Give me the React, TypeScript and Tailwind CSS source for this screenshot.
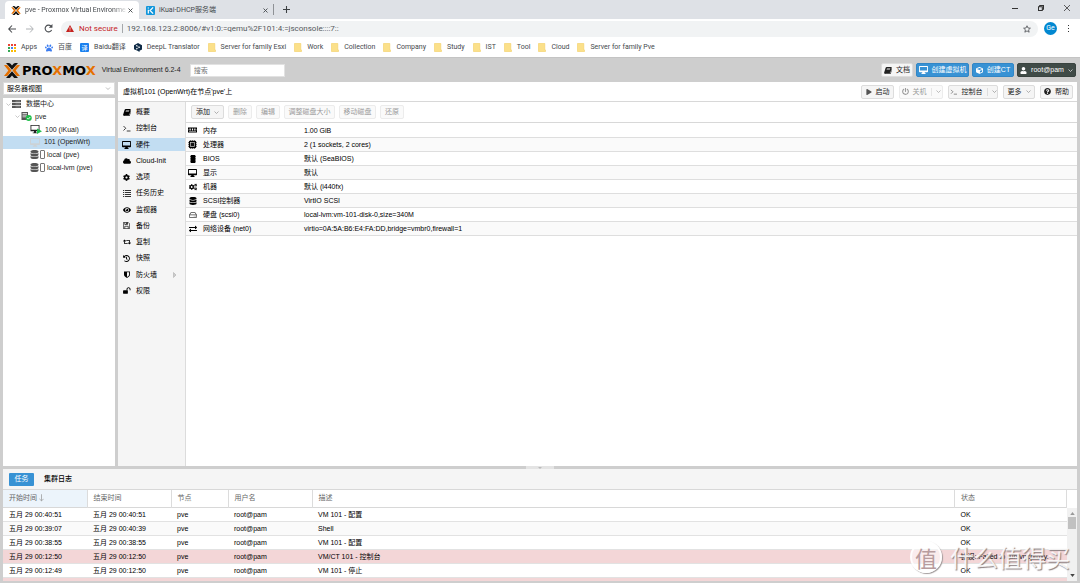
import React from "react";
import {
  FaCloud,
  FaCog,
  FaCogs,
  FaCube,
  FaDatabase,
  FaEye,
  FaHistory,
  FaPlay,
  FaPowerOff,
  FaQuestionCircle,
  FaRegHdd,
  FaRetweet,
  FaExchangeAlt,
  FaUser,
  FaPaw,
} from "react-icons/fa";

type IconProps = { className?: string };

const Monitor = ({ className = "" }: IconProps) => (
  <svg viewBox="0 0 18 16" className={className} fill="currentColor" aria-hidden="true">
    <path fillRule="evenodd" d="M1.500 0h15A1.500 1.500 0 0 1 18 1.500v9.700a1.500 1.500 0 0 1-1.500 1.500H11.500V14H13v1.800H5V14h1.500v-1.300h-5A1.500 1.500 0 0 1 0 11.200V1.500A1.500 1.500 0 0 1 1.500 0zm.300 1.800v7.400h14.400V1.800z" />
  </svg>
);

const Book = ({ className = "" }: IconProps) => (
  <svg viewBox="0 0 16 14" className={className} fill="currentColor" aria-hidden="true">
    <path fillRule="evenodd" d="M5.500 0H14c1.200 0 1.800.900 1.500 2L13 10.500c-.300 1-1 1.500-2 1.500H3.200c-.500 0-.600.600 0 .600H12c.600 0 1-.300 1.200-.800L15.500 4c.500.400.600.900.400 1.500l-2.200 7.300c-.200.700-.900 1.200-1.700 1.200H2.500C1 14 0 12.700.200 11.300L3.300 1.500C3.700.500 4.500 0 5.500 0zM6 3l-.300 1h6.600l.300-1zm-.600 2.200l-.300 1h6.600l.300-1z" />
  </svg>
);

const ListLines = ({ className = "" }: IconProps) => (
  <svg viewBox="0 0 16 14" className={className} fill="currentColor" aria-hidden="true">
    <path d="M0 0h2.500v2.200H0zM4 0h12v2.200H4zM0 4h2.500v2.200H0zM4 4h12v2.200H4zM0 8h2.500v2.200H0zM4 8h12v2.200H4zM0 12h2.500v2.200H0zM4 12h12v2.200H4z" />
  </svg>
);

const Floppy = ({ className = "" }: IconProps) => (
  <svg viewBox="0 0 14 14" className={className} fill="none" stroke="currentColor" strokeWidth="1.300" aria-hidden="true">
    <path d="M.700.700h9.500l3.100 3.100v9.500H.700zM3.500 13V8.500h7V13M3.500 1v4h5.500V1" />
    <path d="M6.500 1.200h2v3h-2z" fill="currentColor" stroke="none" />
  </svg>
);

const DataCenter = ({ className = "" }: IconProps) => (
  <svg viewBox="0 0 18 16" className={className} aria-hidden="true">
    <path fill="#555" d="M0 0h18v4.400H0zM0 5.800h18v4.400H0zM0 11.600h18V16H0z" />
    <path d="M7 2.200h9M7 8h9M7 13.800h9" stroke="#bbb" strokeWidth="1" />
  </svg>
);

const Prompt = ({ className = "" }: IconProps) => (
  <svg viewBox="0 0 16 14" className={className} fill="none" stroke="currentColor" strokeWidth="1.5" aria-hidden="true">
    <path d="M1 2l4.500 4.500L1 11M7.500 12H15" />
  </svg>
);

const Shield = ({ className = "" }: IconProps) => (
  <svg viewBox="0 0 14 16" className={className} aria-hidden="true">
    <path fill="currentColor" fillRule="evenodd" d="M0 1h14v7c0 4-3.500 6.500-7 8-3.500-1.500-7-4-7-8zM7 3v10.700c2.500-1.300 5-3 5-5.700V3z" />
  </svg>
);

const Unlock = ({ className = "" }: IconProps) => (
  <svg viewBox="0 0 18 16" className={className} aria-hidden="true">
    <rect x="0" y="7.500" width="11" height="8" rx="1" fill="currentColor" />
    <path d="M9 8V5a3.500 3.500 0 0 1 7 0v2.500" fill="none" stroke="currentColor" strokeWidth="2.200" />
  </svg>
);

const MemoryStick = ({ className = "" }: IconProps) => (
  <svg viewBox="0 0 18 12" className={className} aria-hidden="true">
    <path fill="currentColor" fillRule="evenodd" d="M0 1h18v3.500a1 1 0 0 0 0 2V11H0V6.500a1 1 0 0 0 0-2zM3 3v4h2.500V3zm4.800 0v4h2.500V3zm4.700 0v4H15V3zM2 9v1h14V9z" />
  </svg>
);

const Cpu = ({ className = "" }: IconProps) => (
  <svg viewBox="0 0 16 16" className={className} aria-hidden="true">
    <rect x="1.500" y="1.500" width="13" height="13" rx="2" fill="currentColor" />
    <path d="M4.500 0v16M8 0v16M11.500 0v16M0 4.500h16M0 8h16M0 11.500h16" stroke="currentColor" strokeWidth=".8" />
    <rect x="4.200" y="4.200" width="7.600" height="7.600" fill="#111" stroke="#cfcfcf" strokeWidth="1.200" />
  </svg>
);

const Chip = ({ className = "" }: IconProps) => (
  <svg viewBox="0 0 12 16" className={className} aria-hidden="true">
    <rect x="1.500" y="0" width="9" height="16" rx="1" fill="currentColor" />
    <path d="M0 3h12M0 6.500h12M0 10h12M0 13.500h12" stroke="currentColor" strokeWidth="1.200" />
  </svg>
);

const ChevronDown = ({ className = "" }: IconProps) => (
  <svg viewBox="0 0 10 6" className={className} fill="none" stroke="currentColor" strokeWidth="1.300" aria-hidden="true">
    <path d="M1 1l4 4 4-4" />
  </svg>
);

const Cross = ({ className = "" }: IconProps) => (
  <svg viewBox="0 0 10 10" className={className} fill="none" stroke="currentColor" strokeWidth="1.800" aria-hidden="true">
    <path d="M1 1l8 8M9 1l-8 8" />
  </svg>
);

const ProxmoxMark = ({ className = "" }: IconProps) => (
  <svg viewBox="0 0 32 30" className={className} aria-hidden="true">
    <path fill="#111" d="M4 0h5.500c1.400 0 2.500.600 3.500 1.700l3 3.400 3-3.400C20 .600 21.100 0 22.500 0H28L16 13.300zM4 30h5.500c1.400 0 2.500-.600 3.500-1.700l3-3.400 3 3.400c1 1.100 2.100 1.700 3.500 1.700H28L16 16.700z" />
    <path fill="#e57000" d="M0 4h4.200c1.500 0 2.700.600 3.600 1.700L15 15l-7.200 9.300C6.900 25.400 5.700 26 4.200 26H0l8.700-11zM32 4h-4.200c-1.500 0-2.700.600-3.600 1.700L17 15l7.200 9.300c.900 1.100 2.100 1.700 3.600 1.700H32l-8.700-11z" />
  </svg>
);

const FolderIcon = () => (
  <svg viewBox="0 0 8 9" className="h-[9px] w-2 shrink-0" aria-hidden="true">
    <path d="M.500.500h6.300v5.800l.700.700v1.500H.500z" fill="#fbe08a" stroke="#f3cf63" strokeWidth=".6" />
  </svg>
);

const AppsIcon = () => (
  <svg viewBox="0 0 8 8" className="size-2 shrink-0" aria-hidden="true">
    <path fill="#ea4335" d="M0 0h2v2H0zM3 0h2v2H3zM6 0h2v2H6z" />
    <path fill="#34a853" d="M0 3h2v2H0z" />
    <path fill="#4285f4" d="M3 3h2v2H3z" />
    <path fill="#fbbc05" d="M6 3h2v2H6zM3 6h2v2H3zM6 6h2v2H6z" />
    <path fill="#34a853" d="M0 6h2v2H0z" />
  </svg>
);

const DeepLIcon = () => (
  <svg viewBox="0 0 16 18" className="h-[9px] w-2 shrink-0" aria-hidden="true">
    <path fill="#0f2b46" d="M8 0l8 4.500v8.300L11 15.500V18l-4-2.300L0 12.500v-8z" />
    <path d="M5.500 5.500l5 3-5 3" fill="none" stroke="#fff" strokeWidth="1" />
    <circle cx="5.500" cy="5.500" r="1.300" fill="#fff" />
    <circle cx="10.500" cy="8.500" r="1.300" fill="#fff" />
    <circle cx="5.500" cy="11.500" r="1.300" fill="#fff" />
  </svg>
);

const bookmarks: { label: string; icon: React.ReactNode }[] = [
  { label: "Apps", icon: <AppsIcon /> },
  { label: "百度", icon: <FaPaw className="size-2 shrink-0 text-[#3b7cf0]" /> },
  {
    label: "Baidu翻译",
    icon: <span className="flex size-[9px] shrink-0 items-center justify-center rounded-[1px] bg-[#1a80ef] text-[6px] text-white">译</span>,
  },
  { label: "DeepL Translator", icon: <DeepLIcon /> },
  ...["Server for family Esxi", "Work", "Collection", "Company", "Study", "IST", "Tool", "Cloud", "Server for family Pve"].map(
    (label) => ({ label, icon: <FolderIcon /> }),
  ),
];

function Browser() {
  return (
    <div className="shrink-0 bg-white font-['Roboto','Noto_Sans_CJK_SC',sans-serif] text-[7px] text-[#45494d]">
      <div className="flex h-[19px] items-end bg-[#dee1e6] pl-[5px]">
        <div className="flex h-[18px] w-[134px] items-center rounded-t-[4px] bg-white px-1.5">
          <ProxmoxMark className="h-[9px] w-[10px] shrink-0" />
          <span className="ml-1 min-w-0 flex-1 overflow-hidden whitespace-nowrap [mask-image:linear-gradient(to_right,#000_85%,transparent)]">
            pve - Proxmox Virtual Environme
          </span>
          <button aria-label="Close tab">
            <Cross className="size-[5px]" />
          </button>
        </div>
        <div className="flex h-[18px] w-[134px] items-center pl-[7px] pr-[5px]">
          <span className="flex size-[9px] shrink-0 items-center justify-center rounded-[1px] bg-[#1296db]">
            <svg viewBox="0 0 8 8" className="size-[7px]" aria-hidden="true">
              <path d="M1.500 3v4.500M7 .500L3.500 4 7 7.500M1.500.500v1.200" fill="none" stroke="#fff" strokeWidth="1.400" />
            </svg>
          </span>
          <span className="ml-1 flex-1 whitespace-nowrap">iKuai-DHCP服务端</span>
          <button aria-label="Close tab">
            <Cross className="size-[5px]" />
          </button>
        </div>
        <span className="mb-1 h-[11px] w-px bg-[#8e9195]" />
        <button aria-label="New tab" className="mb-1.5 ml-[9px]">
          <svg viewBox="0 0 8 8" className="size-[7px]" aria-hidden="true">
            <path d="M4 0v8M0 4h8" stroke="#3c4043" strokeWidth="1.200" />
          </svg>
        </button>
        <div className="ml-auto mb-2 flex items-center gap-5 pr-[10px] text-[#333]">
          <button aria-label="Minimize" className="flex h-1.5 w-1.5 items-center">
            <span className="h-px w-full bg-current" />
          </button>
          <button aria-label="Restore">
            <svg viewBox="0 0 7 7" className="size-[6px]" fill="none" stroke="currentColor" strokeWidth="1.200" aria-hidden="true">
              <path d="M.600 2h4.400v4.400H.600zM2 2V.600h4.400V5H5" />
            </svg>
          </button>
          <button aria-label="Close">
            <svg viewBox="0 0 10 10" className="size-[6px]" stroke="currentColor" strokeWidth="1.300" aria-hidden="true">
              <path d="M0 0l10 10M10 0L0 10" />
            </svg>
          </button>
        </div>
      </div>

      <div className="flex h-[19px] items-center pl-2 pr-[11px]">
        <button aria-label="Back">
          <svg viewBox="0 0 16 16" className="size-2" fill="none" stroke="#4a4d51" strokeWidth="2.200" aria-hidden="true">
            <path d="M16 8H2M8 1L1.500 8 8 15" />
          </svg>
        </button>
        <button aria-label="Forward" className="ml-2.5">
          <svg viewBox="0 0 16 16" className="size-2" fill="none" stroke="#aeb1b4" strokeWidth="2" aria-hidden="true">
            <path d="M0 8h14M8 1l6.500 7L8 15" />
          </svg>
        </button>
        <button aria-label="Reload" className="ml-2.5">
          <svg viewBox="0 0 16 16" className="size-[9px]" fill="none" stroke="#4a4d51" strokeWidth="2" aria-hidden="true">
            <path d="M13.500 10.500A6 6 0 1 1 12.500 4" />
            <path d="M15 0v6.500H8.500z" fill="#4a4d51" stroke="none" />
          </svg>
        </button>
        <div className="ml-2 flex h-4 flex-1 items-center rounded-full bg-[#f1f3f4] pl-[5px] pr-[7px]">
          <svg viewBox="0 0 16 14" className="h-[7px] w-2" aria-hidden="true">
            <path d="M8 0l8 14H0z" fill="#c5221f" />
            <path d="M8 4.500v5M8 10.800v1.600" stroke="#fff" strokeWidth="1.500" />
          </svg>
          <span className="ml-[5px] whitespace-nowrap text-[8px] text-[#c5221f]">Not secure</span>
          <span className="mx-1 h-[9px] w-px bg-[#a5a8ab]" />
          <input
            aria-label="Address"
            className="min-w-0 flex-1 bg-transparent text-[8px] text-[#55595d] outline-none"
            defaultValue="192.168.123.2:8006/#v1:0:=qemu%2F101:4:=jsconsole::::7::"
          />
          <button aria-label="Bookmark this page">
            <svg viewBox="0 0 16 16" className="size-2" fill="none" stroke="#4a4d51" strokeWidth="1.600" aria-hidden="true">
              <path d="M8 1.500l2 4.500 4.800.400-3.700 3.200 1.200 4.800L8 11.800l-4.300 2.600 1.200-4.800L1.200 6.400 6 6z" />
            </svg>
          </button>
        </div>
        <button aria-label="Profile" className="ml-1.5 flex size-[13px] items-center justify-center rounded-full bg-[#0288d1] text-[7px] text-white">
          Ge
        </button>
        <button aria-label="Menu" className="ml-[11px] flex flex-col gap-[2px]">
          <span className="size-px bg-[#333]" />
          <span className="size-px bg-[#333]" />
          <span className="size-px bg-[#333]" />
        </button>
      </div>

      <nav className="flex h-[19px] items-center gap-2 pl-2">
        {bookmarks.map((b) => (
          <a key={b.label} href="#" className="flex items-center gap-[5px] whitespace-nowrap">
            {b.icon}
            {b.label}
          </a>
        ))}
      </nav>
    </div>
  );
}

const btn = "flex h-[14px] items-center justify-center gap-1 rounded-[2px] border whitespace-nowrap ";
const plain = "border-[#dcdcdc] bg-[#f5f5f5] text-[#222] ";
const faded = "border-[#ececec] bg-[#fafafa] text-[#9b9b9b] ";

function Header() {
  return (
    <header className="flex h-6 shrink-0 items-center pl-1 pr-1">
      <ProxmoxMark className="h-[15px] w-4" />
      <span className="ml-[2px] font-['DejaVu_Sans',sans-serif] text-[13px] font-bold leading-none text-black">
        PRO<span className="text-[#e57000]">X</span>MO<span className="text-[#e57000]">X</span>
      </span>
      <span className="ml-1.5 min-w-[83px] whitespace-nowrap text-[#222]">Virtual Environment 6.2-4</span>
      <input
        aria-label="搜索"
        placeholder="搜索"
        className="ml-[5px] h-[13px] w-[95px] border border-[#e2e2e2] bg-white px-[3px] outline-none placeholder:text-[#777]"
      />
      <div className="ml-auto flex gap-[3px]">
        <button className={btn + plain + "w-8"}>
          <Book className="h-[7px] w-2" />
          文档
        </button>
        <button className={btn + "w-[53px] border-[#3186c6] bg-[#3892d4] text-white"}>
          <Monitor className="h-2 w-[9px]" />
          创建虚拟机
        </button>
        <button className={btn + "w-[42px] border-[#3186c6] bg-[#3892d4] text-white"}>
          <FaCube className="size-[7px]" />
          创建CT
        </button>
        <button className={btn + "w-[59px] border-[#39433f] bg-[#404b47] text-white"}>
          <FaUser className="size-[7px]" />
          root@pam
          <ChevronDown className="h-[3px] w-[5px]" />
        </button>
      </div>
    </header>
  );
}

const Expander = () => <ChevronDown className="h-[3px] w-[5px] shrink-0 text-[#aaa]" />;

const Storage = () => (
  <span className="flex items-center gap-px">
    <FaDatabase className="size-[9px] text-[#555]" />
    <span className="h-[9px] w-[5px] rounded-[1px] border border-[#777] bg-white" />
  </span>
);

const tree: { label: string; pad: string; gap: string; icon: React.ReactNode; active?: boolean }[] = [
  { label: "数据中心", pad: "pl-[3px]", gap: "gap-[5px]", icon: <><Expander /><DataCenter className="-ml-1 h-2 w-[9px]" /></> },
  {
    label: "pve",
    pad: "pl-3",
    gap: "gap-[3px]",
    icon: (
      <>
        <Expander />
        <svg viewBox="0 0 22 18" className="-ml-[2px] h-[9px] w-[11px]" aria-hidden="true">
          <path fill="#555" fillRule="evenodd" d="M1 0h13v16H1zM3 2v1.500h9V2zm0 3.500V7h9V5.500zM3 9v1.500h9V9z" />
          <circle cx="15.500" cy="12" r="6" fill="#21bf4b" />
          <path d="M12.500 12l2.200 2.300 3.800-4.300" fill="none" stroke="#fff" strokeWidth="1.800" />
        </svg>
      </>
    ),
  },
  {
    label: "100 (iKuai)",
    pad: "pl-[27px]",
    gap: "gap-[3px]",
    icon: (
      <svg viewBox="0 0 24 18" className="h-[9px] w-3" aria-hidden="true">
        <path fill="#222" fillRule="evenodd" d="M1 0h18v12.500h-7V15h2.500v1.500h-9V15H8v-2.500H1zm1.700 1.700v8h14.600v-8z" />
        <path d="M14 7l10 5.500L14 18z" fill="#21bf4b" />
      </svg>
    ),
  },
  { label: "101 (OpenWrt)", pad: "pl-[27px]", gap: "gap-1", active: true, icon: <Monitor className="h-[9px] w-[10px] text-[#ccd2d6]" /> },
  { label: "local (pve)", pad: "pl-[27px]", gap: "gap-[2px]", icon: <Storage /> },
  { label: "local-lvm (pve)", pad: "pl-[27px]", gap: "gap-[2px]", icon: <Storage /> },
];

function Sidebar() {
  return (
    <aside className="flex w-28 shrink-0 flex-col gap-[3px]">
      <div className="relative">
        <select aria-label="视图" className="block h-[13px] w-full appearance-none border border-[#dcdcdc] bg-white px-[3px] text-black outline-none">
          <option>服务器视图</option>
        </select>
        <ChevronDown className="pointer-events-none absolute right-1 top-[5px] h-[3px] w-[6px] text-[#999]" />
      </div>
      <div className="flex-1 bg-white">
        <ul className="grid h-[76px] grid-rows-6">
          {tree.map((n) => (
            <li key={n.label} className={"flex items-center whitespace-nowrap text-[#222] " + n.pad + " " + n.gap + (n.active ? " bg-[#c2ddf2]" : "")}>
              {n.icon}
              <span>{n.label}</span>
            </li>
          ))}
        </ul>
      </div>
    </aside>
  );
}

const menu: { label: string; icon: React.ReactNode }[] = [
  { label: "概要", icon: <Book className="h-[7px] w-2" /> },
  { label: "控制台", icon: <Prompt className="h-[7px] w-2" /> },
  { label: "硬件", icon: <Monitor className="h-2 w-[9px]" /> },
  { label: "Cloud-Init", icon: <FaCloud className="size-2" /> },
  { label: "选项", icon: <FaCog className="size-[7px]" /> },
  { label: "任务历史", icon: <ListLines className="h-[7px] w-2 text-[#333]" /> },
  { label: "监视器", icon: <FaEye className="size-2" /> },
  { label: "备份", icon: <Floppy className="size-[7px]" /> },
  { label: "复制", icon: <FaRetweet className="size-2" /> },
  { label: "快照", icon: <FaHistory className="size-[7px]" /> },
  { label: "防火墙", icon: <Shield className="h-[7px] w-1.5" /> },
  { label: "权限", icon: <Unlock className="h-[7px] w-2" /> },
];

const hardware: [React.ReactNode, string, string][] = [
  [<MemoryStick className="h-1.5 w-[9px]" />, "内存", "1.00 GiB"],
  [<Cpu className="size-[9px]" />, "处理器", "2 (1 sockets, 2 cores)"],
  [<Chip className="h-2 w-1.5" />, "BIOS", "默认 (SeaBIOS)"],
  [<Monitor className="h-2 w-[9px]" />, "显示", "默认"],
  [<FaCogs className="size-2" />, "机器", "默认 (i440fx)"],
  [<FaDatabase className="size-2" />, "SCSI控制器", "VirtIO SCSI"],
  [<FaRegHdd className="size-2 text-[#444]" />, "硬盘 (scsi0)", "local-lvm:vm-101-disk-0,size=340M"],
  [<FaExchangeAlt className="size-2" />, "网络设备 (net0)", "virtio=0A:5A:B6:E4:FA:DD,bridge=vmbr0,firewall=1"],
];

const actions: [string, string][] = [
  ["删除", "w-6"],
  ["编辑", "w-6"],
  ["调整磁盘大小", "w-[51px]"],
  ["移动磁盘", "w-[37px]"],
  ["还原", "w-6"],
];

function Content() {
  return (
    <main className="flex min-w-0 flex-1 flex-col bg-white">
      <div className="flex h-5 shrink-0 items-center border-b border-[#d8d8d8] pl-[5px] pr-1">
        <h1 className="whitespace-nowrap text-black">虚拟机101 (OpenWrt)在节点'pve'上</h1>
        <div className="ml-auto flex gap-[5px]">
          <button className={btn + plain + "w-[33px]"}>
            <FaPlay className="size-1.5 text-[#555]" />
            启动
          </button>
          <button disabled className={btn + faded + "w-[44px]"}>
            <FaPowerOff className="size-[7px] shrink-0" />
            关机
            <span className="h-2 w-px bg-[#e5e5e5]" />
            <ChevronDown className="h-[3px] w-[5px]" />
          </button>
          <button className={btn + plain + "w-[50px]"}>
            <Prompt className="h-1.5 w-2 text-[#555]" />
            控制台
            <span className="h-2 w-px bg-[#ddd]" />
            <ChevronDown className="h-[3px] w-[5px] text-[#888]" />
          </button>
          <button className={btn + plain + "w-8"}>
            更多
            <ChevronDown className="h-[3px] w-[5px] text-[#888]" />
          </button>
          <button className={btn + plain + "w-[33px]"}>
            <FaQuestionCircle className="size-[7px]" />
            帮助
          </button>
        </div>
      </div>
      <div className="flex min-h-0 flex-1">
        <nav className="w-[68px] shrink-0 border-r border-[#dcdcdc] bg-[#f5f5f5] pt-[2px]">
          <ul className="grid h-[195px] grid-rows-12">
            {menu.map((m) => (
              <li key={m.label} className="flex items-center">
                <a
                  href="#"
                  className={"flex h-[13px] flex-1 items-center whitespace-nowrap pl-1 pr-2 text-black " + (m.label === "硬件" ? "bg-[#c2ddf2]" : "")}
                >
                  <span className="mr-[5px] flex w-[9px] justify-center">{m.icon}</span>
                  {m.label}
                  {m.label === "防火墙" && (
                    <svg viewBox="0 0 4 6" className="ml-auto h-1.5 w-1" aria-hidden="true">
                      <path d="M.500.500L3 3 .500 5.500z" fill="#ccc" stroke="#bbb" strokeWidth=".8" />
                    </svg>
                  )}
                </a>
              </li>
            ))}
          </ul>
        </nav>
        <section className="min-w-0 flex-1">
          <div className="flex h-[21px] items-center gap-1 border-b border-[#d8d8d8] pl-[5px]">
            <button className={btn + plain + "w-[33px]"}>
              添加
              <ChevronDown className="h-[3px] w-[5px] text-[#888]" />
            </button>
            {actions.map(([label, w]) => (
              <button key={label} disabled className={btn + faded + w}>
                {label}
              </button>
            ))}
          </div>
          <table className="w-full table-fixed border-collapse text-left text-black">
            <colgroup>
              <col className="w-[14px]" />
              <col className="w-[101px]" />
              <col />
            </colgroup>
            <tbody>
              {hardware.map(([icon, label, value]) => (
                <tr key={label} className="h-[14px] border-b border-[#dedede] even:bg-[#fafafa]">
                  <td className="p-0 pt-px">
                    <span className="ml-[2px] flex w-[9px] justify-center">{icon}</span>
                  </td>
                  <td className="whitespace-nowrap p-0 pl-[3px] pt-[2px]">{label}</td>
                  <td className="whitespace-nowrap p-0 pl-[3px] pt-[2px]">{value}</td>
                </tr>
              ))}
            </tbody>
          </table>
        </section>
      </div>
    </main>
  );
}

const tasks: string[][] = [
  ["五月 29 00:40:51", "五月 29 00:40:51", "pve", "root@pam", "VM 101 - 配置", "OK"],
  ["五月 29 00:39:07", "五月 29 00:40:39", "pve", "root@pam", "Shell", "OK"],
  ["五月 29 00:38:55", "五月 29 00:38:55", "pve", "root@pam", "VM 101 - 配置", "OK"],
  ["五月 29 00:12:50", "五月 29 00:12:50", "pve", "root@pam", "VM/CT 101 - 控制台", "错误: Failed to run vncproxy."],
  ["五月 29 00:12:49", "五月 29 00:12:50", "pve", "root@pam", "VM 101 - 停止", "OK"],
];

const columns = ["开始时间", "结束时间", "节点", "用户名", "描述", "状态"];

function TaskLog() {
  return (
    <section className="flex h-28 shrink-0 flex-col overflow-hidden bg-white">
      <div role="tablist" className="flex h-[21px] shrink-0 items-center gap-1 border-b border-[#d8d8d8] bg-[#f5f5f5] pl-1.5">
        <button role="tab" aria-selected="true" className="h-[13px] w-[25px] rounded-[1px] bg-[#3892d4] text-white">
          任务
        </button>
        <button role="tab" aria-selected="false" className="px-1.5 font-medium text-black">
          集群日志
        </button>
      </div>
      <div className="flex min-h-0 flex-1">
        <table className="w-full table-fixed border-collapse self-start text-left text-black">
          <colgroup>
            <col className="w-[84px]" />
            <col className="w-[84px]" />
            <col className="w-[57px]" />
            <col className="w-[84px]" />
            <col />
            <col className="w-[112px]" />
          </colgroup>
          <thead>
            <tr className="h-[17px] border-b border-[#d8d8d8]">
              {columns.map((c, i) => (
                <th key={c} className={"whitespace-nowrap border-r border-[#dcdcdc] p-0 pl-1.5 font-normal text-[#666] " + (i === 0 ? "bg-[#ecf4fb]" : "")}>
                  <span className="flex items-center gap-[2px]">
                    {c}
                    {i === 0 && (
                      <svg viewBox="0 0 6 9" className="h-2 w-[5px]" fill="none" stroke="#999" strokeWidth=".9" aria-hidden="true">
                        <path d="M3 0v8M.500 5.500L3 8l2.500-2.500" />
                      </svg>
                    )}
                  </span>
                </th>
              ))}
            </tr>
          </thead>
          <tbody>
            {tasks.map((row, r) => (
              <tr key={r} className={"h-[14px] border-b border-[#e2e2e2] " + (r === 3 ? "bg-[#f3d6d7]" : "even:bg-[#fafafa]")}>
                {row.map((cell, i) => (
                  <td key={i} className="whitespace-nowrap p-0 pl-1.5 pt-[2px]">
                    {cell}
                  </td>
                ))}
              </tr>
            ))}
            <tr className="h-[14px] bg-[#f3d6d7]">
              <td colSpan={6} className="p-0" />
            </tr>
          </tbody>
        </table>
        <div className="flex w-[10px] shrink-0 flex-col pt-[18px]">
          <div className="flex flex-1 flex-col items-center bg-[#f1f1f1] py-1 text-[#555]">
            <svg viewBox="0 0 6 4" className="h-[3px] w-[5px] shrink-0" aria-hidden="true">
              <path d="M3 0l3 4H0z" fill="#999" />
            </svg>
            <span className="mt-[2px] h-3 w-2 shrink-0 bg-[#c1c1c1]" />
            <svg viewBox="0 0 6 4" className="mt-auto h-[3px] w-[5px] shrink-0" aria-hidden="true">
              <path d="M3 4l3-4H0z" fill="#444" />
            </svg>
          </div>
        </div>
      </div>
    </section>
  );
}

export default function App() {
  return (
    <div className="relative flex h-screen flex-col overflow-hidden bg-[#cecece]">
      <Browser />
      <div className="flex min-h-0 flex-1 flex-col border-t border-[#c4c4c4] font-['Liberation_Sans','Noto_Sans_CJK_SC',sans-serif] text-[7px] leading-[10px]">
        <Header />
        <div className="flex min-h-0 flex-1 gap-[3px] px-[3px]">
          <Sidebar />
          <Content />
        </div>
        <div className="flex h-[3px] shrink-0 justify-center">
          <button aria-label="折叠" className="flex w-7 items-center justify-center bg-[#e4e4e4]">
            <svg viewBox="0 0 6 3" className="h-[2px] w-1" aria-hidden="true">
              <path d="M0 0h6L3 3z" fill="#bbb" />
            </svg>
          </button>
        </div>
        <div className="shrink-0 px-[3px] pb-[2px]">
          <TaskLog />
        </div>
      </div>
      <div className="pointer-events-none absolute bottom-2.5 right-2.5 flex items-center gap-2 font-['Noto_Sans_CJK_SC',sans-serif] leading-8 text-white/85">
        <span className="flex size-8 items-center justify-center rounded-full border-2 border-white/85 bg-white/55 text-[22px] text-[#b89c9e] shadow-[1px_1px_1px_#a09a9a]">
          值
        </span>
        <span className="text-[24px] [text-shadow:1px_1px_1px_#8a7f80]">什么值得买</span>
      </div>
    </div>
  );
}
